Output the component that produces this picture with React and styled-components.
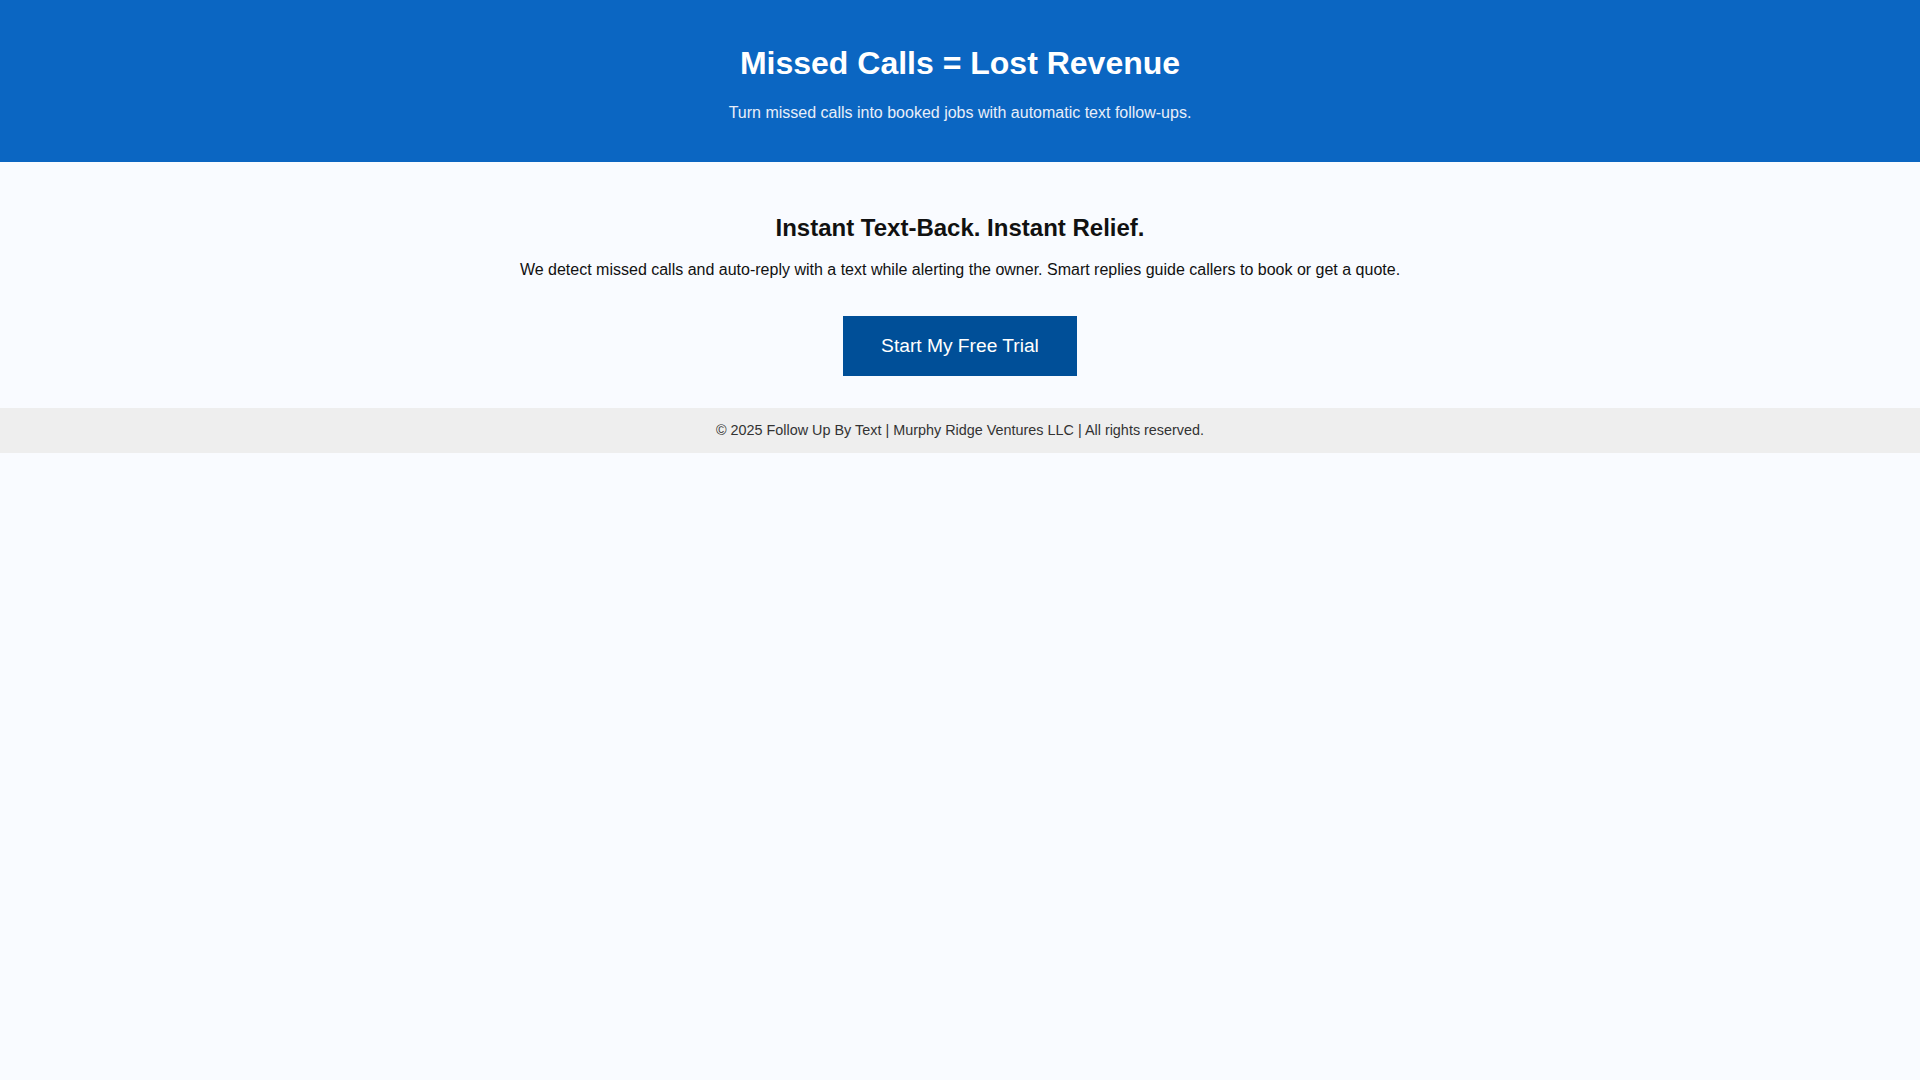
import React from 'react'
import styled, { createGlobalStyle } from 'styled-components'

const GlobalStyle = createGlobalStyle`
  body {
    margin: 0;
    background: #f9fbff;
    font-family: "Liberation Sans", Arial, sans-serif;
  }
`

function App() {
    return (
        <>
            <GlobalStyle />
            <Header>
                <Title>Missed Calls = Lost Revenue</Title>
                <Tagline>Turn missed calls into booked jobs with automatic text follow-ups.</Tagline>
            </Header>

            <Section>
                <H2>Instant Text-Back. Instant Relief.</H2>
                <Para>
                    We detect missed calls and auto-reply with a text while alerting the owner. Smart replies guide callers to book or get a quote.
                </Para>
                <Button href="#">Start My Free Trial</Button>
            </Section>

            <Footer>
                &copy; 2025 Follow Up By Text | Murphy Ridge Ventures LLC | All rights reserved.
            </Footer>
        </>
    )
}

export default App

const Header = styled.header`
background: #0b66c2;
color: #fff;
text-align: center;
padding: 45px 20px 40px;
`

const Title = styled.h1`
margin: 0 0 22px;
font-size: 32px;
line-height: 37px;
font-weight: bold;
`

const Tagline = styled.p`
margin: 0;
font-size: 16px;
line-height: 18px;
color: #e8eef9;
`

const Section = styled.section`
text-align: center;
padding: 52px 20px 32px;
`

const H2 = styled.h2`
margin: 0 0 19px;
font-size: 24px;
line-height: 28px;
color: #111;
`

const Para = styled.p`
margin: 0 0 37px;
font-size: 16px;
line-height: 18px;
color: #111;
`

const Button = styled.a`
display: inline-block;
box-sizing: border-box;
width: 234px;
height: 60px;
line-height: 60px;
background: #004f98;
color: #fff;
font-size: 19.2px;
text-decoration: none;
vertical-align: top;
`

const Footer = styled.footer`
background: #eeeeee;
color: #333;
text-align: center;
font-size: 14.4px;
line-height: 16px;
padding: 14px 20px 15px;
`
